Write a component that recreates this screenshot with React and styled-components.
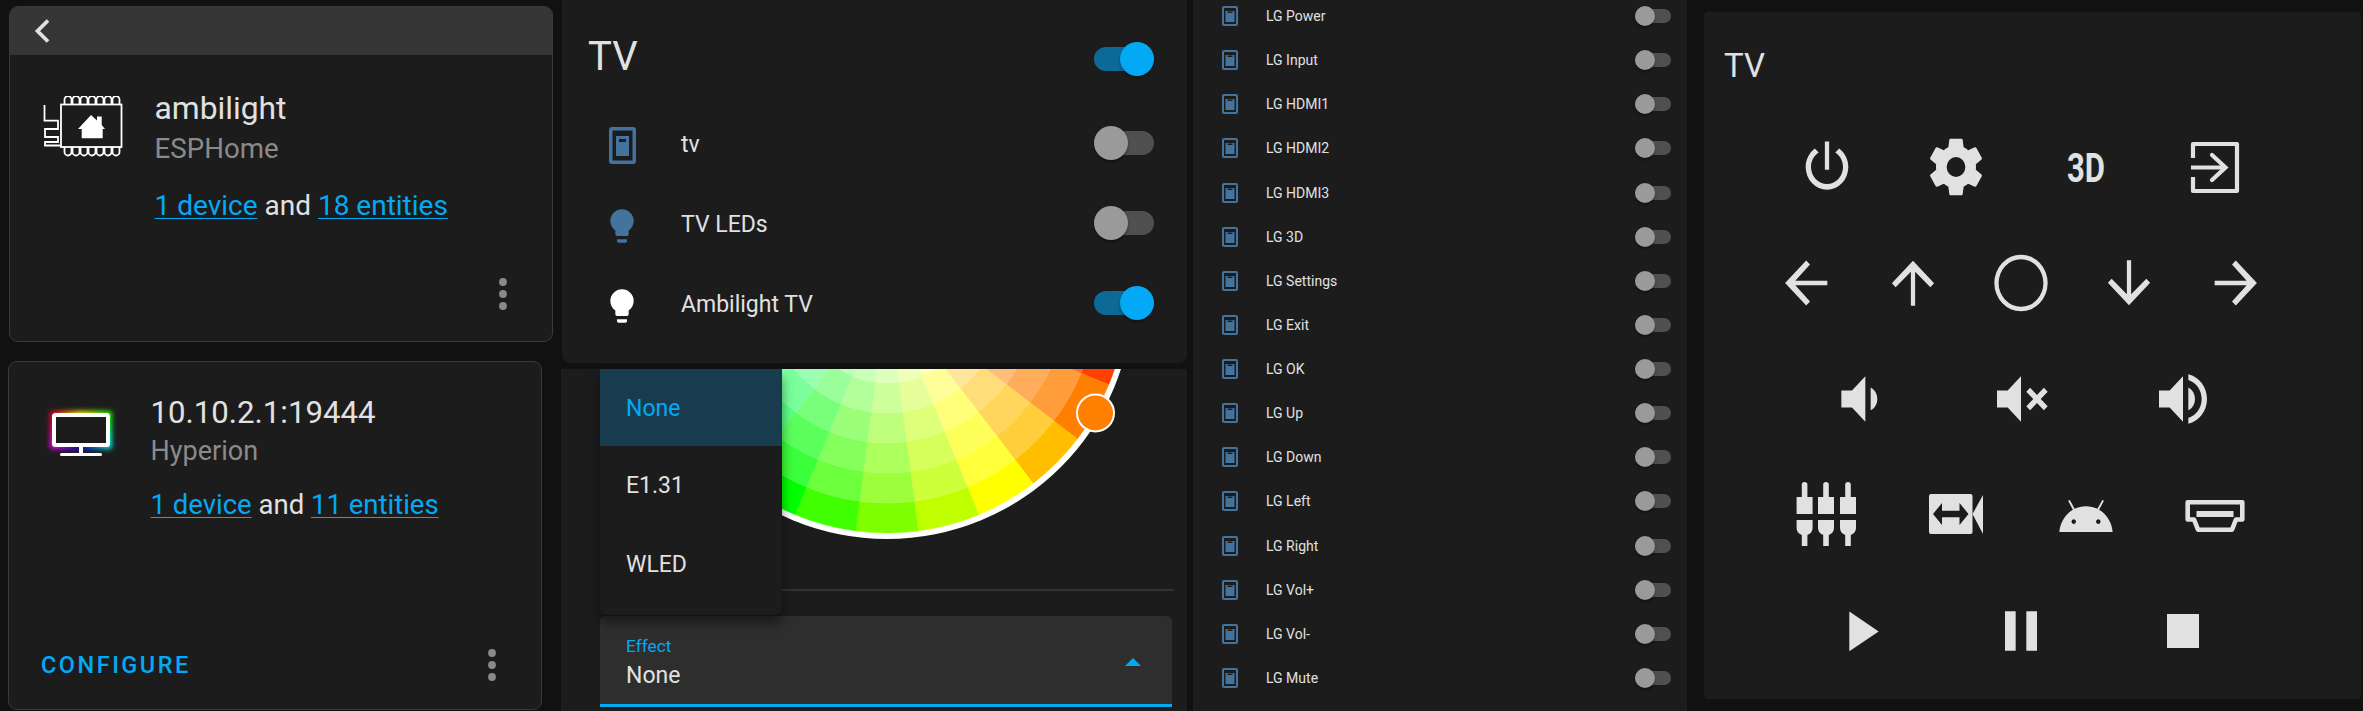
import React from "react";
import styled, { createGlobalStyle } from "styled-components";

const GlobalStyle = createGlobalStyle`
  html, body { margin: 0; padding: 0; background: #111111; }
  body { font-family: Roboto, "Noto Sans", sans-serif; color: #e1e1e1; }
  * { box-sizing: border-box; }
`;

const Page = styled.div`
  display: flex;
  width: 2363px;
  height: 711px;
  overflow: hidden;
  background: #111111;
`;

/* ---------- column 1: integration cards ---------- */
const IntegrationColumn = styled.div`
  width: 562px;
  flex: none;
  display: flex;
  flex-direction: column;
`;
const IntegrationCard = styled.section`
  display: flex;
  flex-direction: column;
  margin-left: ${(p) => p.$left}px;
  margin-top: ${(p) => p.$top}px;
  width: ${(p) => p.$width}px;
  height: ${(p) => p.$height}px;
  background: #1c1c1c;
  border: 1.5px solid #3a3a3a;
  border-radius: 9px;
  overflow: hidden;
`;
const CardHeader = styled.div`
  height: 49px;
  flex: none;
  margin: -1px -1px 0;
  background: #363636;
  display: flex;
  align-items: center;
  padding-left: 25px;
`;
const CardBody = styled.div`
  display: flex;
  align-items: flex-start;
  padding-top: ${(p) => p.$top}px;
  padding-left: ${(p) => p.$left}px;
`;
const LogoSlot = styled.div`
  flex: none;
  width: ${(p) => p.$width}px;
  height: 62px;
  margin-top: ${(p) => p.$top}px;
`;
const TextStack = styled.div`
  display: flex;
  flex-direction: column;
`;
const IntegrationTitle = styled.div`
  font-size: ${(p) => p.$size}px;
  line-height: 40px;
  color: #e1e1e1;
  white-space: nowrap;
`;
const IntegrationSub = styled.div`
  font-size: ${(p) => p.$size}px;
  line-height: 36px;
  margin-top: ${(p) => p.$top}px;
  color: #8a8a8a;
`;
const LinkLine = styled.div`
  font-size: ${(p) => p.$size}px;
  line-height: 36px;
  margin-top: ${(p) => p.$top}px;
  color: #e1e1e1;
  white-space: nowrap;
`;
const TextLink = styled.a`
  color: #03a9f4;
  text-decoration: underline;
  text-decoration-thickness: 1px;
  text-underline-offset: 3px;
`;
const CardFooter = styled.div`
  margin-top: auto;
  display: flex;
  align-items: center;
  justify-content: space-between;
  padding: 0 ${(p) => p.$right}px ${(p) => p.$bottom}px 32px;
`;
const ConfigureButton = styled.span`
  font-size: 23.5px;
  line-height: 32px;
  font-weight: 500;
  letter-spacing: 2.5px;
  color: #03a9f4;
`;
const DotsSvg = styled.svg`
  display: block;
  width: 8px;
  height: 32px;
  fill: #8a8a8a;
`;
const Dots = () => (
  <DotsSvg viewBox="0 0 8 32">
    <circle cx="4" cy="4" r="3.9" />
    <circle cx="4" cy="16" r="3.9" />
    <circle cx="4" cy="28" r="3.9" />
  </DotsSvg>
);

const bumps = (y, dir) =>
  Array.from({ length: 7 }, (_, i) => {
    const x = 21 + i * 8;
    return dir < 0
      ? `M${x + 0.5} ${y}V${y - 5}a3.5 3.5 0 0 1 7 0V${y}`
      : `M${x + 0.5} ${y}V${y + 5}a3.5 3.5 0 0 0 7 0V${y}`;
  }).join("");

const EspLogo = () => (
  <svg width="80" height="62" viewBox="0 0 80 62" style={{ display: "block" }}>
    <g fill="none" stroke="#fff" strokeWidth="1.8">
      <rect x="18" y="8.5" width="60.5" height="42.5" />
      <path d={bumps(8.5, -1)} />
      <path d={bumps(51, 1)} />
      <path d="M1.5 9V24.7H15V33H2V41H15V46H2V49.5H18" />
    </g>
    <path fill="#fff" d="M48 19L54 24.5V20.5H58.7V29L62 33H59.7V42.3H38.7V33H35Z" />
  </svg>
);

const glowColors = (() => {
  const stops = [];
  const path = [
    [14, 12, 0, 60],
    [41, 12, 60, 110],
    [68, 12, 110, 180],
    [68, 42, 180, 240],
    [41, 42, 240, 300],
    [14, 42, 300, 360],
  ];
  const next = [
    [41, 12],
    [68, 12],
    [68, 42],
    [41, 42],
    [14, 42],
    [14, 12],
  ];
  path.forEach(([x, y, h1, h2], i) => {
    for (let k = 0; k < 5; k++) {
      const a = k / 5;
      const b = (k + 1) / 5;
      stops.push({
        x1: x + (next[i][0] - x) * a,
        y1: y + (next[i][1] - y) * a,
        x2: x + (next[i][0] - x) * b,
        y2: y + (next[i][1] - y) * b,
        c: `hsl(${h1 + (h2 - h1) * a}, 100%, 50%)`,
      });
    }
  });
  return stops;
})();

const HyperionLogo = () => (
  <svg width="80" height="58" viewBox="0 0 80 58" style={{ display: "block" }}>
    <defs>
      <filter id="glow" x="-30%" y="-40%" width="160%" height="180%">
        <feGaussianBlur stdDeviation="2.4" />
      </filter>
    </defs>
    <g filter="url(#glow)" strokeWidth="7" strokeLinecap="square">
      {glowColors.map((s, i) => (
        <line key={i} x1={s.x1} y1={s.y1} x2={s.x2} y2={s.y2} stroke={s.c} />
      ))}
    </g>
    <rect x="14" y="12" width="54" height="30" rx="1.5" fill="#1c1c1c" stroke="#fff" strokeWidth="4" />
    <rect x="39" y="44" width="4" height="6" fill="#fff" />
    <rect x="20" y="50" width="42" height="3" rx="1.5" fill="#fff" />
  </svg>
);

/* ---------- switches ---------- */
const SwitchRoot = styled.div`
  position: relative;
  flex: none;
  width: ${(p) => (p.$large ? 60 : 36)}px;
  height: ${(p) => (p.$large ? 34 : 20)}px;
  display: flex;
  align-items: center;
`;
const SwitchTrack = styled.div`
  width: 100%;
  height: ${(p) => (p.$large ? 24 : 14)}px;
  border-radius: 12px;
  background: ${(p) => (p.$on ? "#0d6a96" : "#505050")};
`;
const SwitchKnob = styled.div`
  position: absolute;
  top: 0;
  ${(p) => (p.$on ? "right: 0;" : "left: 0;")}
  width: ${(p) => (p.$large ? 34 : 20)}px;
  height: ${(p) => (p.$large ? 34 : 20)}px;
  border-radius: 50%;
  background: ${(p) => (p.$on ? "#03a9f4" : "#9a9a9a")};
  box-shadow: 0 2px 3px rgba(0, 0, 0, 0.35);
`;
const Switch = ({ on, large }) => (
  <SwitchRoot $large={large}>
    <SwitchTrack $on={on} $large={large} />
    <SwitchKnob $on={on} $large={large} />
  </SwitchRoot>
);

const LightSwitchIcon = ({ large }) =>
  large ? (
    <svg width="27" height="37" viewBox="0 0 27 37" fill="#44739e" style={{ display: "block" }}>
      <path
        fillRule="evenodd"
        d="M3 0H24A3 3 0 0 1 27 3V34A3 3 0 0 1 24 37H3A3 3 0 0 1 0 34V3A3 3 0 0 1 3 0ZM3.5 3.5V33.5H23.5V3.5ZM7 9H20V29H7ZM10 12V15H17V12Z"
      />
    </svg>
  ) : (
    <svg width="16" height="20" viewBox="0 0 16 20" fill="#44739e" style={{ display: "block" }}>
      <path
        fillRule="evenodd"
        d="M2 0H14A2 2 0 0 1 16 2V18A2 2 0 0 1 14 20H2A2 2 0 0 1 0 18V2A2 2 0 0 1 2 0ZM2 2V18H14V2ZM3.5 5H12.5V16H3.5ZM5.5 5.5V7H10.5V5.5Z"
      />
    </svg>
  );

/* ---------- column 2 ---------- */
const LightsColumn = styled.div`
  width: 625px;
  margin-left: 0;
  flex: none;
  display: flex;
  flex-direction: column;
`;
const EntitiesCard = styled.section`
  height: 363px;
  flex: none;
  background: #1c1c1c;
  border-radius: 0 0 8px 8px;
`;
const EntitiesHeading = styled.div`
  height: 103px;
  padding: 15px 33px 0 26px;
  display: flex;
  align-items: center;
  justify-content: space-between;
`;
const HeadingText = styled.div`
  font-size: 40px;
  font-weight: 400;
  line-height: 48px;
  margin-top: -5px;
  color: #e1e1e1;
`;
const EntityRow = styled.div`
  height: 80px;
  display: flex;
  align-items: center;
  padding: 0 33px 0 40px;
`;
const EntityIcon = styled.div`
  flex: none;
  width: 40px;
  height: 40px;
  margin-top: 5px;
  display: flex;
  align-items: center;
  justify-content: center;
  color: ${(p) => p.$color};
`;
const EntityName = styled.div`
  flex: 1;
  margin-left: 39px;
  padding-top: 3px;
  font-size: 23px;
  color: #e1e1e1;
`;
const BulbSvg = styled.svg`
  display: block;
  width: 40px;
  height: 40px;
  fill: currentColor;
`;
const Bulb = () => (
  <BulbSvg viewBox="0 0 24 24">
    <path d="M12,2A7,7 0 0,0 5,9C5,11.38 6.19,13.47 8,14.74V17A1,1 0 0,0 9,18H15A1,1 0 0,0 16,17V14.74C17.81,13.47 19,11.38 19,9A7,7 0 0,0 12,2M9,21A1,1 0 0,0 10,22H14A1,1 0 0,0 15,21V20H9V21Z" />
  </BulbSvg>
);

const LightCard = styled.section`
  position: relative;
  margin-top: 6px;
  margin-left: -1px;
  width: 626px;
  height: 342px;
  background: #1c1c1c;
`;
const WheelArea = styled.div`
  height: 220px;
  overflow: hidden;
`;
const WheelSvg = styled.svg`
  display: block;
  width: 492px;
  height: 492px;
  margin: -322px 0 0 79.5px;
`;
const Divider = styled.div`
  height: 2px;
  margin: 0 13px 0 39px;
  background: #333333;
`;
const EffectSelect = styled.div`
  margin: 25px 0 0 39px;
  width: 572px;
  height: 91px;
  display: flex;
  align-items: flex-start;
  justify-content: space-between;
  padding: 20px 31px 0 26px;
  background: #2e2e2e;
  border-radius: 6px 6px 0 0;
  border-bottom: 3px solid #03a9f4;
`;
const SelectLabel = styled.div`
  font-size: 17.3px;
  line-height: 20px;
  color: #03a9f4;
`;
const SelectValue = styled.div`
  font-size: 23px;
  line-height: 30px;
  margin-top: 5px;
  color: #e1e1e1;
`;
const SelectArrow = styled.svg`
  display: block;
  width: 16px;
  height: 8px;
  margin-top: 22px;
  fill: #03a9f4;
`;
const EffectMenu = styled.div`
  position: absolute;
  left: 39px;
  top: 0;
  width: 182px;
  height: 246px;
  background: #1c1c1c;
  border-radius: 0 0 6px 6px;
  box-shadow: 0 8px 12px rgba(0, 0, 0, 0.45);
`;
const MenuItem = styled.div`
  height: ${(p) => (p.$active ? 77 : 79)}px;
  display: flex;
  align-items: center;
  padding-left: 26px;
  padding-top: ${(p) => (p.$active ? 2 : 0)}px;
  font-size: 23px;
  color: ${(p) => (p.$active ? "#03a9f4" : "#e1e1e1")};
  background: ${(p) => (p.$active ? "#183c4e" : "transparent")};
`;

const hsv = (h, s) => {
  const f = (n) => {
    const k = (n + h / 60) % 6;
    return Math.round(255 * (1 - s * Math.max(0, Math.min(k, 4 - k, 1))));
  };
  return `rgb(${f(5)},${f(3)},${f(1)})`;
};
const polar = (r, deg) => {
  const a = (deg * Math.PI) / 180;
  return [246 + r * Math.cos(a), 246 + r * Math.sin(a)];
};
const wheelCells = (() => {
  const cells = [];
  for (let k = 8; k >= 1; k--) {
    const r2 = k * 30;
    const r1 = (k - 1) * 30;
    for (let i = 0; i < 24; i++) {
      const h = i * 15;
      const a1 = h - 7.5;
      const a2 = h + 7.5;
      const [x1, y1] = polar(r2, a1);
      const [x2, y2] = polar(r2, a2);
      const [x3, y3] = polar(r1, a2);
      const [x4, y4] = polar(r1, a1);
      cells.push({
        d: `M${x1} ${y1}A${r2} ${r2} 0 0 1 ${x2} ${y2}L${x3} ${y3}A${r1} ${r1} 0 0 0 ${x4} ${y4}Z`,
        c: hsv(h, k === 8 ? 1 : (k - 1) / 8 + 0.02),
      });
    }
  }
  return cells;
})();

const Wheel = () => (
  <WheelSvg viewBox="0 0 492 492">
    <circle cx="246" cy="246" r="246" fill="#fff" />
    {wheelCells.map((c, i) => (
      <path key={i} d={c.d} fill={c.c} stroke={c.c} strokeWidth="0.4" />
    ))}
    <circle cx="454.5" cy="366" r="18.5" fill="#ff8000" stroke="#fff" strokeWidth="2" />
  </WheelSvg>
);

/* ---------- column 3 ---------- */
const ListCard = styled.section`
  flex: none;
  width: 494px;
  margin-left: 6px;
  height: 711px;
  overflow: hidden;
  background: #1c1c1c;
`;
const ListInner = styled.div`
  margin-top: -6px;
  display: flex;
  flex-direction: column;
`;
const ListRow = styled.div`
  height: 44.13px;
  display: flex;
  align-items: center;
  padding: 0 16px 0 29px;
`;
const ListName = styled.div`
  flex: 1;
  margin-left: 28px;
  font-size: 14px;
  color: #e1e1e1;
`;

/* ---------- column 4 ---------- */
const RemoteCard = styled.section`
  flex: none;
  width: 657px;
  height: 687px;
  margin: 12px 0 0 17px;
  padding: 33.5px 0 0 20px;
  background: #1c1c1c;
  border-radius: 4px;
`;
const RemoteTitle = styled.div`
  font-size: 33px;
  line-height: 40px;
  color: #e1e1e1;
`;
const PadGrid = styled.div`
  margin: 47.5px 0 0 6px;
  width: 582px;
  display: flex;
  flex-direction: column;
  gap: 48px;
`;
const PadRow = styled.div`
  display: flex;
  justify-content: space-evenly;
`;
const PadGlyph = styled.svg`
  display: block;
  flex: none;
  width: 64px;
  height: 68px;
  fill: #e1e1e1;
`;
const ThreeD = styled.text`
  font-family: Roboto, sans-serif;
  font-weight: 700;
  font-size: 40px;
  fill: #e1e1e1;
`;

const Mdi = ({ d }) => (
  <PadGlyph viewBox="0 0 24 24" preserveAspectRatio="none">
    <path d={d} />
  </PadGlyph>
);

const P = {
  power:
    "M16.56,5.44L15.11,6.89C16.84,7.94 18,9.83 18,12A6,6 0 0,1 12,18A6,6 0 0,1 6,12C6,9.83 7.16,7.94 8.88,6.88L7.44,5.44C5.36,6.88 4,9.28 4,12A8,8 0 0,0 12,20A8,8 0 0,0 20,12C20,9.28 18.64,6.88 16.56,5.44M12.8,3H11.2V13H12.8",
  cog: "M12,15.5A3.5,3.5 0 0,1 8.5,12A3.5,3.5 0 0,1 12,8.5A3.5,3.5 0 0,1 15.5,12A3.5,3.5 0 0,1 12,15.5M19.43,12.97C19.47,12.65 19.5,12.33 19.5,12C19.5,11.67 19.47,11.34 19.43,11L21.54,9.37C21.73,9.22 21.78,8.95 21.66,8.73L19.66,5.27C19.54,5.05 19.27,4.96 19.05,5.05L16.56,6.05C16.04,5.66 15.5,5.32 14.87,5.07L14.5,2.42C14.46,2.18 14.25,2 14,2H10C9.75,2 9.54,2.18 9.5,2.42L9.13,5.07C8.5,5.32 7.96,5.66 7.44,6.05L4.95,5.05C4.73,4.96 4.46,5.05 4.34,5.27L2.34,8.73C2.21,8.95 2.27,9.22 2.46,9.37L4.57,11C4.53,11.34 4.5,11.67 4.5,12C4.5,12.33 4.53,12.65 4.57,12.97L2.46,14.63C2.27,14.78 2.21,15.05 2.34,15.27L4.34,18.73C4.46,18.95 4.73,19.03 4.95,18.95L7.44,17.94C7.96,18.34 8.5,18.68 9.13,18.93L9.5,21.58C9.54,21.82 9.75,22 10,22H14C14.25,22 14.46,21.82 14.5,21.58L14.87,18.93C15.5,18.67 16.04,18.34 16.56,17.94L19.05,18.95C19.27,19.03 19.54,18.95 19.66,18.73L21.66,15.27C21.78,15.05 21.73,14.78 21.54,14.63L19.43,12.97Z",
  left: "M20,11.2V12.8H8L13.5,18.5L12.08,19.92L4.16,12L12.08,4.08L13.5,5.5L8,11.2H20Z",
  up: "M12.8,20H11.2V8L5.5,13.5L4.08,12.08L12,4.16L19.92,12.08L18.5,13.5L12.8,8V20Z",
  circle:
    "M12,20.4A8.4,8.4 0 0,1 3.6,12A8.4,8.4 0 0,1 12,3.6A8.4,8.4 0 0,1 20.4,12A8.4,8.4 0 0,1 12,20.4M12,2A10,10 0 0,0 2,12A10,10 0 0,0 12,22A10,10 0 0,0 22,12A10,10 0 0,0 12,2Z",
  down: "M11.2,4H12.8V16L18.5,10.5L19.92,11.92L12,19.84L4.08,11.92L5.5,10.5L11.2,16V4Z",
  right: "M4,11.2V12.8H16L10.5,18.5L11.92,19.92L19.84,12L11.92,4.08L10.5,5.5L16,11.2H4Z",
  volMed: "M5,9V15H9L14,20V4L9,9M18.5,12C18.5,10.23 17.5,8.71 16,7.97V16C17.5,15.29 18.5,13.76 18.5,12Z",
  volMute:
    "M3,9H7L12,4V20L7,15H3V9M16.59,12L14,9.41L15.41,8L18,10.59L20.59,8L22,9.41L19.41,12L22,14.59L20.59,16L18,13.41L15.41,16L14,14.59L16.59,12Z",
  volHigh:
    "M14,3.23V5.29C16.89,6.15 19,8.83 19,12C19,15.17 16.89,17.84 14,18.7V20.77C18,19.86 21,16.28 21,12C21,7.72 18,4.14 14,3.23M16.5,12C16.5,10.23 15.5,8.71 14,7.97V16C15.5,15.29 16.5,13.76 16.5,12M3,9V15H7L12,20V4L7,9H3Z",
  android:
    "M16.61 15.15C16.15 15.15 15.77 14.78 15.77 14.32S16.15 13.5 16.61 13.5H16.61C17.07 13.5 17.45 13.86 17.45 14.32C17.45 14.78 17.07 15.15 16.61 15.15M7.41 15.15C6.95 15.15 6.57 14.78 6.57 14.32C6.57 13.86 6.95 13.5 7.41 13.5H7.41C7.87 13.5 8.24 13.86 8.24 14.32C8.24 14.78 7.87 15.15 7.41 15.15M16.91 10.14L18.58 7.26C18.67 7.09 18.61 6.88 18.45 6.79C18.28 6.69 18.07 6.75 18 6.92L16.29 9.83C14.95 9.22 13.5 8.9 12 8.91C10.47 8.91 9 9.24 7.73 9.82L6.04 6.91C5.95 6.74 5.74 6.68 5.57 6.78C5.4 6.87 5.35 7.08 5.44 7.25L7.1 10.13C4.25 11.69 2.29 14.58 2 18H22C21.72 14.59 19.77 11.7 16.91 10.14H16.91Z",
  play: "M8,5.14V19.14L19,12.14L8,5.14Z",
  pause: "M14,19H18V5H14M6,19H10V5H6V19Z",
  stop: "M18,18H6V6H18V18Z",
};

const jack = (x) =>
  `M${x - 2.8} 16V3.5Q${x - 2.8} 1 ${x} 1Q${x + 2.8} 1 ${x + 2.8} 3.5V16H${x + 8}V33H${x - 8}V16ZM${x - 8} 39H${x + 8}V47Q${x + 8} 52 ${x + 2.8} 54V65H${x - 2.8}V54Q${x - 8} 52 ${x - 8} 47Z`;

const ThreeDGlyph = () => (
  <PadGlyph viewBox="0 0 64 68">
    <ThreeD x="13" y="48.5" textLength="38" lengthAdjust="spacingAndGlyphs">
      3D
    </ThreeD>
  </PadGlyph>
);
const InputGlyph = () => (
  <PadGlyph viewBox="0 0 64 68">
    <g fill="none" stroke="#e1e1e1" strokeWidth="4.2">
      <path d="M10 25V11H54V58H10V44" strokeLinejoin="round" />
      <path d="M8 34.5H42" />
      <path d="M29 22L42.5 34.5L29 47" strokeLinecap="round" />
    </g>
  </PadGlyph>
);
const JacksGlyph = () => (
  <PadGlyph viewBox="0 0 64 68">
    <path d={jack(9.6) + jack(31) + jack(53)} />
  </PadGlyph>
);
const CameraGlyph = () => (
  <PadGlyph viewBox="0 0 64 68">
    <path
      fillRule="evenodd"
      d="M7 13H46.5A2 2 0 0 1 48.5 15V51A2 2 0 0 1 46.5 53H7A2 2 0 0 1 5 51V15A2 2 0 0 1 7 13ZM9 33L18 44V36.3H35.5V44L44.5 33L35.5 22V29.7H18V22Z"
    />
    <path d="M48.5 33L59 14V53Z" />
  </PadGlyph>
);
const HdmiGlyph = () => (
  <PadGlyph viewBox="0 0 64 68">
    <path
      d="M4.7 21.2H59.3V38.5H53L49 48.7H15L11 38.5H4.7Z"
      fill="none"
      stroke="#e1e1e1"
      strokeWidth="4.6"
      strokeLinejoin="round"
    />
    <rect x="13.5" y="30" width="37" height="6" />
  </PadGlyph>
);

const LG_NAMES = [
  "LG Power",
  "LG Input",
  "LG HDMI1",
  "LG HDMI2",
  "LG HDMI3",
  "LG 3D",
  "LG Settings",
  "LG Exit",
  "LG OK",
  "LG Up",
  "LG Down",
  "LG Left",
  "LG Right",
  "LG Vol+",
  "LG Vol-",
  "LG Mute",
];

export default function App() {
  return (
    <Page>
      <GlobalStyle />
      <IntegrationColumn>
        <IntegrationCard $left={9} $top={6} $width={544} $height={336}>
          <CardHeader>
            <svg width="16" height="24" viewBox="0 0 16 24" fill="none" stroke="#e1e1e1" strokeWidth="3.8">
              <path d="M14 1.5L3.5 12L14 22.5" />
            </svg>
          </CardHeader>
          <CardBody $top={33} $left={33}>
            <LogoSlot $width={111.5} $top={8}>
              <EspLogo />
            </LogoSlot>
            <TextStack>
              <IntegrationTitle $size={31.8}>ambilight</IntegrationTitle>
              <IntegrationSub $size={27.7} $top={3}>ESPHome</IntegrationSub>
              <LinkLine $size={28} $top={21}>
                <TextLink>1 device</TextLink> and <TextLink>18 entities</TextLink>
              </LinkLine>
            </TextStack>
          </CardBody>
          <CardFooter $right={45} $bottom={31}>
            <span />
            <Dots />
          </CardFooter>
        </IntegrationCard>
        <IntegrationCard $left={8} $top={19} $width={534} $height={349}>
          <CardBody $top={31} $left={31}>
            <LogoSlot $width={110.5} $top={9.5}>
              <HyperionLogo />
            </LogoSlot>
            <TextStack>
              <IntegrationTitle $size={31.2}>10.10.2.1:19444</IntegrationTitle>
              <IntegrationSub $size={27} $top={0}>Hyperion</IntegrationSub>
              <LinkLine $size={27.5} $top={18}>
                <TextLink>1 device</TextLink> and <TextLink>11 entities</TextLink>
              </LinkLine>
            </TextStack>
          </CardBody>
          <CardFooter $right={45} $bottom={28}>
            <ConfigureButton>CONFIGURE</ConfigureButton>
            <Dots />
          </CardFooter>
        </IntegrationCard>
      </IntegrationColumn>

      <LightsColumn>
        <EntitiesCard>
          <EntitiesHeading>
            <HeadingText>TV</HeadingText>
            <Switch on large />
          </EntitiesHeading>
          <EntityRow>
            <EntityIcon $color="#44739e">
              <LightSwitchIcon large />
            </EntityIcon>
            <EntityName>tv</EntityName>
            <Switch large />
          </EntityRow>
          <EntityRow>
            <EntityIcon $color="#44739e">
              <Bulb />
            </EntityIcon>
            <EntityName>TV LEDs</EntityName>
            <Switch large />
          </EntityRow>
          <EntityRow>
            <EntityIcon $color="#ffffff">
              <Bulb />
            </EntityIcon>
            <EntityName>Ambilight TV</EntityName>
            <Switch on large />
          </EntityRow>
        </EntitiesCard>
        <LightCard>
          <WheelArea>
            <Wheel />
          </WheelArea>
          <Divider />
          <EffectSelect>
            <div>
              <SelectLabel>Effect</SelectLabel>
              <SelectValue>None</SelectValue>
            </div>
            <SelectArrow viewBox="0 0 16 8">
              <path d="M0 8L8 0L16 8Z" />
            </SelectArrow>
          </EffectSelect>
          <EffectMenu>
            <MenuItem $active>None</MenuItem>
            <MenuItem>E1.31</MenuItem>
            <MenuItem>WLED</MenuItem>
          </EffectMenu>
        </LightCard>
      </LightsColumn>

      <ListCard>
        <ListInner>
          {LG_NAMES.map((name) => (
            <ListRow key={name}>
              <LightSwitchIcon />
              <ListName>{name}</ListName>
              <Switch />
            </ListRow>
          ))}
        </ListInner>
      </ListCard>

      <RemoteCard>
        <RemoteTitle>TV</RemoteTitle>
        <PadGrid>
          <PadRow>
            <Mdi d={P.power} />
            <Mdi d={P.cog} />
            <ThreeDGlyph />
            <InputGlyph />
          </PadRow>
          <PadRow>
            <Mdi d={P.left} />
            <Mdi d={P.up} />
            <Mdi d={P.circle} />
            <Mdi d={P.down} />
            <Mdi d={P.right} />
          </PadRow>
          <PadRow>
            <Mdi d={P.volMed} />
            <Mdi d={P.volMute} />
            <Mdi d={P.volHigh} />
          </PadRow>
          <PadRow>
            <JacksGlyph />
            <CameraGlyph />
            <Mdi d={P.android} />
            <HdmiGlyph />
          </PadRow>
          <PadRow>
            <Mdi d={P.play} />
            <Mdi d={P.pause} />
            <Mdi d={P.stop} />
          </PadRow>
        </PadGrid>
      </RemoteCard>
    </Page>
  );
}
